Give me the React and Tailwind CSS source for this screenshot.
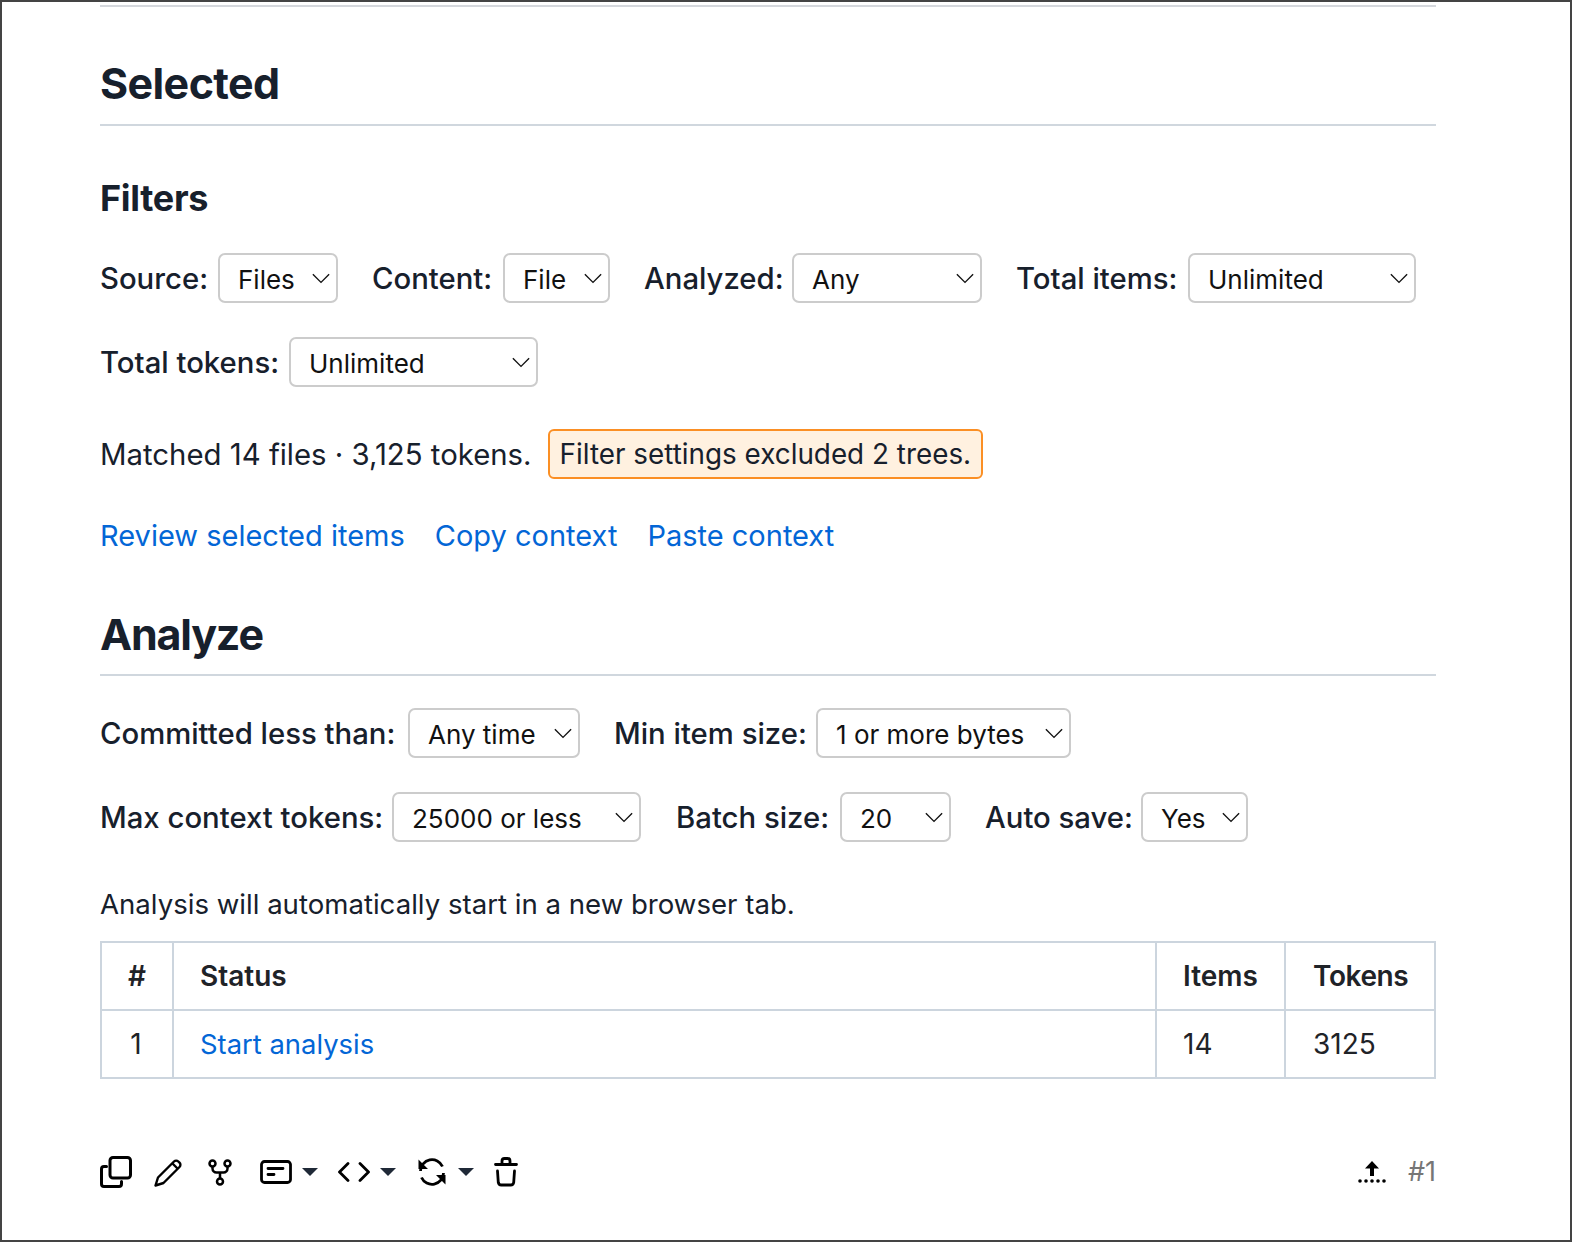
const font = { fontFamily: 'Inter, sans-serif' }

function Chevron() {
  return (
    <svg
      viewBox="0 0 16 16"
      className="absolute right-[7px] top-[15px] h-[20px] w-[20px] pointer-events-none"
      fill="none"
      stroke="#111"
      strokeWidth="1.1"
    >
      <path d="M1.5 5 8 11.5 14.5 5" />
    </svg>
  )
}

function Field({ label, value, labelClass, selectClass, className = '' }) {
  return (
    <div className={`flex items-center ${className}`}>
      <span className={`whitespace-nowrap pt-[2px] text-[29.3px] font-medium leading-[48px] ${labelClass}`}>{label}</span>
      <div className="relative">
        <select
          defaultValue={value}
          className={`block h-[50px] appearance-none rounded-[7px] border-2 border-[#cccccc] bg-white pb-[2px] pl-[18px] text-[26px] text-[#111] outline-none ${selectClass}`}
        >
          <option>{value}</option>
        </select>
        <Chevron />
      </div>
    </div>
  )
}

function Caret({ className = '' }) {
  return <span className={`h-0 w-0 border-x-[8px] border-t-[8px] border-x-transparent border-t-[#1f2937] ${className}`} />
}

export default function App() {
  return (
    <div
      style={font}
      className="box-border h-[1242px] w-[1572px] overflow-hidden border-2 border-[#444444] bg-white pl-[98px] pr-[134px] pt-[3px] text-[29px] leading-[50px] text-[#17202c]"
    >
      <div className="h-[2px] bg-[#d4d7dc]" />

      <h2 className="mt-[48px] border-b-2 border-[#d0d7de] pb-[13px] text-[43px] font-bold leading-[56px] tracking-[-0.6px]">
        Selected
      </h2>

      <h3 className="mt-[47px] text-[36px] font-bold leading-[50px] tracking-[-0.3px]">Filters</h3>

      <div className="mt-[30px] flex">
        <Field label="Source:" value="Files" labelClass="w-[118px]" selectClass="w-[120px]" className="mr-[34px]" />
        <Field label="Content:" value="File" labelClass="w-[131px]" selectClass="w-[107px]" className="mr-[34px]" />
        <Field label="Analyzed:" value="Any" labelClass="w-[148px]" selectClass="w-[190px]" className="mr-[34px]" />
        <Field label="Total items:" value="Unlimited" labelClass="w-[172px]" selectClass="w-[228px]" />
      </div>
      <div className="mt-[34px] flex">
        <Field label="Total tokens:" value="Unlimited" labelClass="w-[189px]" selectClass="w-[249px]" />
      </div>

      <div className="mt-[42px] flex items-center">
        <span className="pt-[2px] text-[29.35px] leading-[48px]">Matched 14 files · 3,125 tokens.</span>
        <span className="ml-[16px] h-[50px] rounded-[6px] border-2 border-[#fb8f24] bg-[#fff1e0] px-[10px] text-[27.85px] leading-[46px] text-[#17202c]">
          Filter settings excluded 2 trees.
        </span>
      </div>

      <div className="mt-[32px] flex gap-[30px] text-[#0366d6]">
        <a>Review selected items</a>
        <a>Copy context</a>
        <a>Paste context</a>
      </div>

      <h2 className="mt-[45px] border-b-2 border-[#d0d7de] pb-[12px] text-[43px] font-bold leading-[56px] tracking-[-1.2px]">
        Analyze
      </h2>

      <div className="mt-[32px] flex">
        <Field label="Committed less than:" value="Any time" labelClass="w-[308px]" selectClass="w-[172px]" className="mr-[34px]" />
        <Field label="Min item size:" value="1 or more bytes" labelClass="w-[202px]" selectClass="w-[255px]" />
      </div>
      <div className="mt-[34px] flex">
        <Field label="Max context tokens:" value="25000 or less" labelClass="w-[292px]" selectClass="w-[249px]" className="mr-[35px]" />
        <Field label="Batch size:" value="20" labelClass="w-[164px]" selectClass="w-[111px]" className="mr-[34px]" />
        <Field label="Auto save:" value="Yes" labelClass="w-[156px]" selectClass="w-[107px]" />
      </div>

      <p className="mt-[37px] text-[27.6px]">Analysis will automatically start in a new browser tab.</p>

      <table className="mt-[12px] w-full border-collapse text-[28px] text-[#1f2328]">
        <thead>
          <tr className="h-[68px]">
            <th className="w-[72px] border-2 border-[#ccd5de] text-center font-semibold">#</th>
            <th className="border-2 border-[#ccd5de] pl-[26px] text-left font-semibold">Status</th>
            <th className="w-[129px] border-2 border-[#ccd5de] pl-[26px] text-left font-semibold">Items</th>
            <th className="w-[150px] border-2 border-[#ccd5de] pl-[27px] text-left font-semibold tracking-[-0.4px]">Tokens</th>
          </tr>
        </thead>
        <tbody>
          <tr className="h-[68px]">
            <td className="border-2 border-[#ccd5de] pr-[2px] text-center">1</td>
            <td className="border-2 border-[#ccd5de] pl-[26px] text-[27.4px] text-[#0366d6]">Start analysis</td>
            <td className="border-2 border-[#ccd5de] pl-[26px]">14</td>
            <td className="border-2 border-[#ccd5de] pl-[27px]">3125</td>
          </tr>
        </tbody>
      </table>

      <div className="mt-[68px] flex items-center justify-between text-black">
        <div className="flex items-center">
          <svg viewBox="0 0 32 32" className="h-[32px] w-[32px]" fill="none" stroke="currentColor" strokeWidth="3" strokeLinecap="round">
            <rect x="10" y="1.5" width="20.5" height="20.5" rx="3" />
            <path d="M6.5 10.5H4A2.5 2.5 0 0 0 1.500 13v15A2.500 2.500 0 0 0 4 30.500h15a2.500 2.500 0 0 0 2.500-2.500v-2.500" />
          </svg>
          <svg viewBox="0 0 29 29" className="ml-[22px] h-[29px] w-[29px]" fill="none" stroke="currentColor" strokeWidth="2.4" strokeLinejoin="round">
            <path d="M1.500 27.500l2.500-8L20 3.500a3 3 0 0 1 4.300 0l1.200 1.200a3 3 0 0 1 0 4.300L9.500 25z" />
            <path d="M18.500 5.500l5 5" />
          </svg>
          <svg viewBox="0 0 24 27" className="ml-[25px] h-[27px] w-[24px]" fill="none" stroke="currentColor" strokeWidth="2.500">
            <circle cx="4.500" cy="4.500" r="3" />
            <circle cx="19.500" cy="4.500" r="3" />
            <circle cx="12" cy="22.500" r="3" />
            <path d="M4.500 7.500v2a4 4 0 0 0 4 4h7a4 4 0 0 0 4-4v-2M12 13.500v6" />
          </svg>
          <svg viewBox="0 0 32 24" className="ml-[28px] h-[24px] w-[32px]" fill="none" stroke="currentColor" strokeWidth="2.800" strokeLinecap="round">
            <rect x="1.500" y="1.500" width="29" height="21" rx="3" />
            <path d="M8 8.500h15M8 14.500h6" />
          </svg>
          <Caret className="ml-[10px]" />
          <svg viewBox="0 0 32 20" className="ml-[20px] h-[20px] w-[32px]" fill="none" stroke="currentColor" strokeWidth="2.800" strokeLinecap="round" strokeLinejoin="round">
            <path d="M10 1.500 1.500 10l8.500 8.500M22 1.500l8.500 8.500-8.500 8.500" />
          </svg>
          <Caret className="ml-[10px]" />
          <svg viewBox="0 0 28 28" className="ml-[22px] h-[28px] w-[28px]" fill="none" stroke="currentColor" strokeWidth="2.800">
            <path d="M2.500 13A11.500 11.500 0 0 1 24.500 8.500M25.500 15A11.500 11.500 0 0 1 3.500 19.500" />
            <path d="M0.500 1.500v9.500H10zM27.500 26.500V17H18z" fill="currentColor" stroke="none" />
          </svg>
          <Caret className="ml-[12px]" />
          <svg viewBox="0 0 24 30" className="ml-[20px] h-[30px] w-[24px]" fill="none" stroke="currentColor" strokeWidth="2.800" strokeLinecap="round">
            <path d="M8 7V4a2.500 2.500 0 0 1 2.500-2.500h3A2.500 2.500 0 0 1 16 4v3M1.500 7.500h21M3.500 14l.8 11.500a3 3 0 0 0 3 2.500h9.400a3 3 0 0 0 3-2.500L20.500 14" />
          </svg>
        </div>
        <div className="flex items-center">
          <svg viewBox="0 0 28 22" className="h-[22px] w-[28px]" fill="currentColor">
            <path d="M14 0l7 7.500h-5V15h-4V7.500H7z" />
            <circle cx="2" cy="20" r="1.800" />
            <circle cx="8" cy="20" r="1.800" />
            <circle cx="14" cy="20" r="1.800" />
            <circle cx="20" cy="20" r="1.800" />
            <circle cx="26" cy="20" r="1.800" />
          </svg>
          <span className="ml-[22px] text-[27px] text-[#767676]">#1</span>
        </div>
      </div>
    </div>
  )
}
